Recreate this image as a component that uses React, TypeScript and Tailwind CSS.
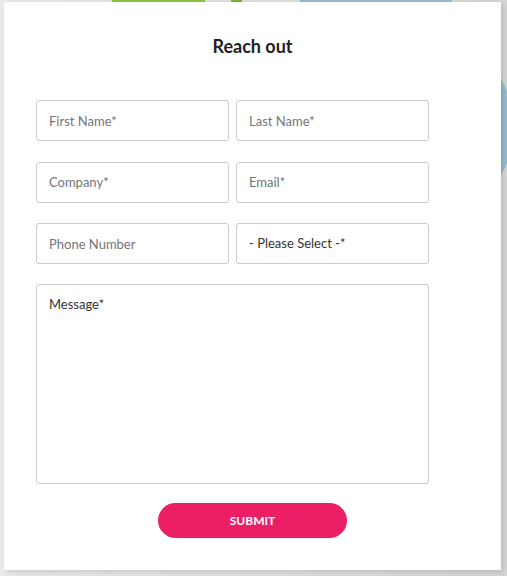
export default function App() {
  const field =
    'h-[41px] rounded-[3px] border border-[#cccccc] bg-white px-[12px] text-[13px] outline-none placeholder:text-[#757575]';

  return (
    <div
      className="relative w-[507px] h-[576px] overflow-hidden bg-[#d4d4d4]"
      style={{ fontFamily: 'Lato, "Noto Sans", sans-serif' }}
    >
      {/* background behind the card */}
      <div className="absolute inset-0 bg-gradient-to-r from-[#ebebeb] to-[#d6d6d6]"></div>
      <div className="absolute left-[112px] top-[-20px] w-[93px] h-[30px] bg-[#8cc63f]"></div>
      <div className="absolute left-[231px] top-[-20px] w-[11px] h-[30px] bg-[#7ab536]"></div>
      <div className="absolute left-[300px] top-[-20px] w-[152px] h-[30px] bg-[#94bfd0]"></div>
      <div className="absolute left-[440px] top-[66px] w-[68px] h-[122px] rounded-full bg-[#94bfd0]"></div>

      <div className="relative ml-[4px] mt-[2px] w-[497px] h-[568px] bg-white shadow-[2px_2px_6px_rgba(0,0,0,0.15)] pt-[32px]">
        <h2 className="text-center text-[18px] leading-[24px] font-bold text-[#222]">Reach out</h2>

        <form className="mt-[42px] ml-[32px] w-[393px] flex flex-col">
          <div className="grid grid-cols-2 gap-x-[7px] gap-y-[20.5px]">
            <input className={field} placeholder="First Name*" />
            <input className={field} placeholder="Last Name*" />
            <input className={field} placeholder="Company*" />
            <input className={field} placeholder="Email*" />
            <input className={field} placeholder="Phone Number" />
            <div className={`${field} flex items-center text-[#333]`}>- Please Select -*</div>
          </div>
          <textarea
            className="mt-[20px] h-[200px] resize-none rounded-[3px] border border-[#cccccc] px-[12px] py-[10px] text-[13px] outline-none placeholder:text-[#333]"
            placeholder="Message*"
          />
        </form>

        <div className="flex justify-center mt-[19px]">
          <button className="w-[189px] h-[35px] rounded-full bg-[#ec1f66] text-white text-[12px] font-bold">
            SUBMIT
          </button>
        </div>
      </div>
    </div>
  );
}
